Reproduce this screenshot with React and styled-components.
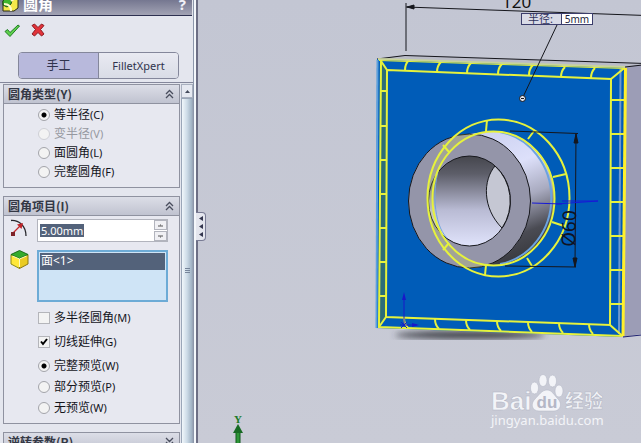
import React, { useState } from "react";
import styled, { createGlobalStyle, css } from "styled-components";

const GlobalStyle = createGlobalStyle`
  * { box-sizing: border-box; }
  body { margin: 0; background: #c5c8d4; }
  body, button, input {
    font-family: "Noto Sans", "Noto Sans CJK SC", sans-serif;
    font-size: 12px;
    line-height: 16px;
    color: #14151c;
  }
`;

const Window = styled.main`
  display: flex;
  height: 100vh;
  overflow: hidden;
`;

const Panel = styled.aside`
  display: flex;
  flex-direction: column;
  flex: none;
  width: 198px;
  border-right: 2px solid #6d6f85;
  background: #e4e6ee;
  box-shadow: inset -2px 0 #f4f7fb, inset -3px 0 #8c97ab;
  overflow: hidden;
`;

const TitleBar = styled.header`
  display: flex;
  flex: none;
  align-items: flex-end;
  gap: 4px;
  height: 16px;
  margin-right: 4px;
  padding: 0 6px 3px 2px;
  border-bottom: 1px solid #2d3050;
  background: linear-gradient(#757790, #a2a3b4);
  overflow: hidden;
`;

const Title = styled.h1`
  flex: 1;
  margin: 0;
  font: bold 15px/16px "Noto Sans CJK SC", sans-serif;
  color: #fff;
`;

const BareButton = styled.button`
  display: flex;
  align-items: center;
  justify-content: center;
  padding: 0;
  border: 0;
  background: none;
`;

const HelpButton = styled(BareButton)`
  font: bold 15px/16px "Noto Sans", sans-serif;
  color: #f2f2f8;
`;

const Actions = styled.div`
  display: flex;
  flex: none;
  align-items: center;
  gap: 10px;
  height: 28px;
  padding-left: 3px;
`;

const Tabs = styled.div`
  display: flex;
  flex: none;
  height: 27px;
  margin: 8px 17px 3px 18px;
  border: 1px solid #84879b;
  border-radius: 4px;
  overflow: hidden;
`;

const Tab = styled.button`
  flex: 1;
  padding: 0;
  border: 0;
  background: linear-gradient(#e9eaf2, #d9dce6);
  font-size: ${(p) => (p.$latin ? "11px" : "12px")};
  color: #30334d;
  ${(p) =>
    p.$active &&
    css`
      border-right: 1px solid #84879b;
      background: #b8b9dc;
    `}
`;

const ScrollArea = styled.div`
  display: flex;
  flex: 1;
  min-height: 0;
  margin-right: 3px;
  border-top: 1px solid #84879b;
`;

const Groups = styled.div`
  display: flex;
  flex: 1;
  flex-direction: column;
  gap: 8px;
  padding: 1px 1px 0 3px;
  overflow: hidden;
`;

const Group = styled.section`
  flex: none;
  border: 1px solid #8f92a0;
  background: #e7e8f0;
`;

const GroupHeader = styled.h2`
  display: flex;
  align-items: center;
  justify-content: space-between;
  height: 19px;
  margin: 0;
  padding: 0 5px 0 4px;
  border-bottom: 1px solid #8f92a0;
  background: linear-gradient(#dcdee7, #c0c3d0);
  font: bold 12px/18px "Noto Sans CJK SC", sans-serif;
  color: #343845;
`;

const TypeBody = styled.div`
  display: flex;
  flex-direction: column;
  gap: 3px;
  padding: 3px 8px 7px 34px;
`;

const ItemsBody = styled.div`
  display: flex;
  flex-direction: column;
  padding: 3px 11px 7px 4px;
`;

const Stack = styled.div`
  display: flex;
  flex-direction: column;
  gap: ${(p) => p.$gap}px;
  padding: ${(p) => p.$top}px 0 0 30px;
`;

const Option = styled.label`
  display: flex;
  align-items: center;
  gap: 4px;
  height: 16px;
  white-space: nowrap;
  color: ${(p) => (p.$muted ? "#9698a0" : "#14151c")};
`;

const Shortcut = styled.span`
  font-size: 11px;
`;

const Choice = styled.input`
  flex: none;
  appearance: none;
  width: 12px;
  height: 12px;
  margin: 0;
  border: 1px solid #a3a4aa;
  background: #f3f3f3;
  &:disabled { border-color: #cfd0d6; }
`;

const Radio = styled(Choice)`
  border-radius: 50%;
  &:checked { background: radial-gradient(circle, #000 2px, #f3f3f3 3px); }
`;

const CheckBox = styled(Choice)`
  border-color: #b4b5ba;
`;

const CheckWrap = styled.span`
  display: grid;
  > * { grid-area: 1 / 1; }
  svg { pointer-events: none; }
`;

const FieldRow = styled.div`
  display: flex;
  gap: 8px;
  margin-bottom: 8px;
`;

const FieldIcon = styled.span`
  flex: none;
  width: 21px;
  padding-left: 2px;
`;

const Spinner = styled.div`
  display: flex;
  flex: 1;
  min-width: 0;
  height: 23px;
  border: 1px solid #b2b4bd;
  background: #fff;
`;

const SizeInput = styled.input`
  flex: 1;
  min-width: 0;
  width: 0;
  padding: 0 0 0 3px;
  border: 0;
  outline: 0;
  background: linear-gradient(#53627a, #53627a) 2px 4px / 44px 13px no-repeat;
  color: #fff;
  font: 11px/16px "Noto Sans", sans-serif;
`;

const SpinButtons = styled.div`
  display: flex;
  flex-direction: column;
  gap: 1px;
  width: 13px;
`;

const SpinButton = styled(BareButton)`
  flex: 1;
  border: 1px solid #b2b4bd;
  background: #f0f0f4;
`;

const FaceList = styled.ul`
  flex: 1;
  height: 52px;
  margin: 0;
  padding: 1px;
  border: 2px solid #6dabd6;
  background: #cfe4f6;
  list-style: none;
`;

const Face = styled.li`
  height: 17px;
  padding-left: 1px;
  background: #53627a;
  color: #fff;
  font-size: 12px;
`;

const ScrollBar = styled.div`
  display: flex;
  flex: none;
  flex-direction: column;
  width: 12px;
  padding-top: 1px;
  background: #dfe3ea;
`;

const ScrollUp = styled(BareButton)`
  height: 14px;
  border: 1px solid #a9b0bf;
  background: #e6e9f1;
`;

const Thumb = styled.div`
  display: flex;
  flex: 1;
  align-items: center;
  justify-content: center;
  border: 1px solid #9aa6b8;
  border-bottom: 0;
  background: linear-gradient(90deg, #f1f7fb, #cddbe7 50%, #9eb0c2);
`;

const Viewport = styled.section`
  position: relative;
  flex: 1;
  min-width: 0;
  background: linear-gradient(#c3c6d3, #c9cbd6);
`;

const Scene = styled.svg`
  display: block;
  width: 100%;
  height: 100%;
`;

const Flyout = styled.button`
  position: absolute;
  left: -2px;
  top: 212px;
  display: flex;
  align-items: center;
  justify-content: center;
  width: 10px;
  height: 29px;
  padding: 0;
  border: 1px solid #787b94;
  border-left: 0;
  border-radius: 0 4px 4px 0;
  background: #e4e6ee;
`;

const Callout = styled.label`
  position: absolute;
  left: 72.9%;
  top: 2.9%;
  display: flex;
  width: 72px;
  height: 12px;
  border: 1px solid #3b3d6b;
  background: #d9dbe7;
  font-size: 11px;
  line-height: 10px;
  color: #30335c;
`;

const CalloutName = styled.span`
  flex: 1;
  padding-left: 6px;
  border-right: 1px solid #3b3d6b;
  white-space: nowrap;
`;

const CalloutInput = styled.input`
  width: 30px;
  padding: 0;
  border: 0;
  background: #fff;
  text-align: center;
  font: 10px/10px "Noto Sans", sans-serif;
  color: #1c1e3c;
`;

const AppIcon = () => (
  <svg width="17" height="16" viewBox="0 0 17 16">
    <path d="M1 5 5 0h11v12l-4 3H1z" fill="#f5e94a" stroke="#2d2d12" />
    <path d="M1 5 5 0h10l-5 4-1 4-4 3-4-2z" fill="#3fb52e" stroke="#1d5212" />
    <path d="M2 8q7 0 7 7M9 5l6-4" fill="none" stroke="#fffbd0" strokeWidth="2" />
  </svg>
);

const OkIcon = () => (
  <svg width="18" height="15" viewBox="0 0 18 15">
    <path d="M2 8.500 4.500 6.500 7 9.500 15 2l1.500 1L7 13.500z" fill="#5fd04c" stroke="#1f7d25" strokeLinejoin="round" />
  </svg>
);

const CancelIcon = () => (
  <svg width="14" height="14" viewBox="0 0 14 14">
    <path d="M1 2.500 3.500 1 7 4.500 10.500 1 13 2.500 9.500 6.500 13 11l-2.500 2L7 9.500 3.500 13 1 11l3.500-4.500z" fill="#e2333a" stroke="#8d1a20" strokeLinejoin="round" />
  </svg>
);

const Chevrons = ({ down }) => (
  <svg width="9" height="10" viewBox="0 0 9 10">
    <path d={down ? "M1 1l3.500 3.500L8 1M1 5l3.500 3.500L8 5" : "M1 5l3.500-3.500L8 5M1 9l3.500-3.500L8 9"} fill="none" stroke="#4a4e5e" strokeWidth="1.300" />
  </svg>
);

const RadiusIcon = () => (
  <svg width="18" height="18" viewBox="0 0 18 18">
    <path d="M1 1.500C9 1 16 7 16 17" fill="none" stroke="#26262b" strokeWidth="1.300" />
    <path d="M3 14 10 7" stroke="#c3262b" strokeWidth="1.300" />
    <path d="M13 4 11.500 10 7 5.500z" fill="#c3262b" />
    <rect x="1" y="13" width="4" height="4" fill="#7d2227" />
  </svg>
);

const CubeIcon = () => (
  <svg width="19" height="19" viewBox="0 0 19 19">
    <path d="M1 4.500v9.500l8.500 4.500V8z" fill="#ffe83a" stroke="#8b8a15" />
    <path d="M9.500 8v10.500L18 14V4.500z" fill="#eacb22" stroke="#8b7a15" />
    <path d="M1 4.500 9.500.5 18 4.500 9.500 8.500z" fill="#35ab2d" stroke="#1d6e1b" />
    <path d="M9.500 9V17M2.500 6l7 3 7-3" fill="none" stroke="#fffbc0" />
  </svg>
);

const Tick = () => (
  <svg width="12" height="12" viewBox="0 0 12 12">
    <path d="M3 5.500 5 8l4-5" fill="none" stroke="#000" strokeWidth="2" />
  </svg>
);

function RadioOption({ name, text, hotkey, value, onPick, disabled }) {
  return (
    <Option $muted={disabled}>
      <Radio type="radio" name={name} disabled={disabled} checked={value === text} onChange={() => onPick(text)} />
      <span>{text}<Shortcut>({hotkey})</Shortcut></span>
    </Option>
  );
}

function CheckOption({ text, hotkey, initial }) {
  const [on, setOn] = useState(initial);
  return (
    <Option>
      <CheckWrap>
        <CheckBox type="checkbox" checked={on} onChange={() => setOn(!on)} />
        {on && <Tick />}
      </CheckWrap>
      <span>{text}<Shortcut>({hotkey})</Shortcut></span>
    </Option>
  );
}

const EDGE = "#e6f23c";
const topTicks = [[405, 70], [437, 72], [467, 73], [498, 74], [529, 75], [561, 77], [591, 78]];
const bottomTicks = [[404, 318], [435, 319], [466, 320], [497, 321], [528, 322], [559, 323], [589, 324]];
const leftTicks = [91, 126, 160, 194, 228, 262, 296];
const rightTicks = [100, 134, 168, 202, 236, 270, 304];

function Model() {
  return (
    <Scene viewBox="198 0 443 443" preserveAspectRatio="xMidYMid slice" role="img" aria-label="圆角预览">
      <defs>
        <linearGradient id="boss" x1="0" y1="0" x2="0.250" y2="1">
          <stop offset="0" stopColor="#c9cff0" />
          <stop offset="0.350" stopColor="#dde0fa" />
          <stop offset="0.600" stopColor="#a9abc0" />
          <stop offset="0.850" stopColor="#4a4b53" />
          <stop offset="1" stopColor="#3b3c42" />
        </linearGradient>
        <linearGradient id="bore" x1="0" y1="0" x2="0" y2="1">
          <stop offset="0" stopColor="#45464d" />
          <stop offset="0.200" stopColor="#5d5e69" />
          <stop offset="0.600" stopColor="#b9bbd4" />
          <stop offset="1" stopColor="#e0e3fb" />
        </linearGradient>
        <filter id="soft"><feGaussianBlur stdDeviation="3" /></filter>
        <clipPath id="face"><ellipse cx="469.500" cy="201" rx="61" ry="67" /></clipPath>
      </defs>

      <ellipse cx="470" cy="335" rx="75" ry="4" fill="#3d3f47" filter="url(#soft)" />
      <path d="M377 59 405 55 660 64 625 67z" fill="#b9bbc7" />
      <path d="M625 67 660 62V331L623 337z" fill="#9c9db6" />
      <path d="M377 59 405 55.500 660 64M625 67l35-4" fill="none" stroke="#15161c" />
      <path d="M623 337l37-4" stroke="#1f2270" />
      <path d="M377 59 625 67 622 337 376 328z" fill="#005cb8" />
      <path d="M377.500 60 376.500 328" stroke="#5ba0dc" strokeWidth="2" />
      <path d="M381 61 387 70 386 317 379 327z" fill="#2c6d78" />
      <path d="M620.500 69 619 334" stroke="#6f98cc" strokeWidth="2" />

      <g fill="none" stroke={EDGE} strokeWidth="2">
        <path d="M381 61v-1L379 327 622.500 336" />
        <path d="M387 70 611 79 610 325 386 317z" />
        <path d="M381 61l6 9M625 67.500 611 79M622.500 336 610 325M379 327l7-10" />
        {topTicks.map(([x, y]) => <path key={x} d={`M${x} ${y}q0-6 4-10`} />)}
        {bottomTicks.map(([x, y]) => <path key={x} d={`M${x} ${y}q0 6 4 10`} />)}
        {leftTicks.map((y) => <path key={y} d={`M380 ${y}h6`} />)}
        {rightTicks.map((y) => <path key={y} d={`M611 ${y}h13`} />)}
      </g>
      <path d="M378 59 625 67" stroke="#c9d49a" strokeWidth="2" />
      <path d="M379 60.500 625 68.500" stroke={EDGE} />
      <path d="M625.500 68 623 336" stroke="#fff02c" strokeWidth="3" />

      <path d="M469 134 493 131A62 67 0 0 1 493 265L469 268z" fill="url(#boss)" />
      <path d="M500 132A62 67 0 0 1 500 264" fill="none" stroke="#6ba3e0" strokeWidth="2" />
      <ellipse cx="469.500" cy="201" rx="61" ry="67" fill="#9495a9" stroke="#17181d" />
      <ellipse cx="469.500" cy="201" rx="41" ry="45" fill="url(#bore)" stroke="#17181d" />
      <path d="M495 166C483 180 482 208 502 228A41 45 0 0 0 495 166z" fill="#c5c7d3" stroke="#17181d" />
      <path d="M440 165C432 187 433 224 447 238" fill="none" stroke="#72a5df" />

      <path clipPath="url(#face)" fillRule="evenodd" fill="#e6e84a" fillOpacity="0.180" d="M427.500 198a71 78.500 0 1 0 142 0a71 78.500 0 1 0-142 0zM432.500 198.500a61 67 0 1 0 122 0a61 67 0 1 0-122 0z" />
      <g fill="none" stroke={EDGE} strokeWidth="2">
        <ellipse cx="498.500" cy="198" rx="71" ry="78.500" />
        <ellipse cx="493.500" cy="198.500" rx="61" ry="67" />
        <path d="M487 120l-1 11M534 131l-6 8M566 174l-13 3M564 226l-12-4M532 266l-5-8M485 275l1-10M443 250l6-7M443 145l6 7" />
      </g>

      <g stroke="#15161c" fill="none">
        <path d="M406 3v48M406 7l254 9M557 25 523 97" />
        <path d="M510 131 578 133.500M576 134l-1 133M505 266l71 1" />
        <path d="M407 7l7-2v4zM576 134l-2 9h4zM575 267l-2-9h4z" fill="#15161c" />
      </g>
      <text x="502" y="8" fontFamily="Noto Sans" fontSize="17" fill="#111">120</text>
      <text transform="translate(575 247) rotate(-88)" fontFamily="Noto Sans" fontSize="19" fill="#101322">Ø60</text>
      <circle cx="522.500" cy="98.500" r="3" fill="#dfe2ec" stroke="#15161c" />
      <path d="M521 98.500h3" stroke="#15161c" />

      <path d="M532 203 562 204M556 204 598 201 562 201" fill="none" stroke="#1719d6" />
      <path d="M404 326V296M400 325h17M401 322l6 6M407 322l-6 6" fill="none" stroke="#1818c8" />
      <path d="M404 292l2 8h-4zM419 325l-7-2v4z" fill="#1818c8" />

      <path d="M236 430h4v30h-4z" fill="#2d9637" stroke="#125b1c" />
      <path d="M238 424l5 9h-10z" fill="#176b23" />
      <text x="238" y="423" textAnchor="middle" fontFamily="Liberation Serif" fontSize="11" fontWeight="bold" fill="#1b7a27">Y</text>

      <g fill="#f3f4f8" stroke="#b1b4c3" strokeWidth="0.500">
        <text x="491" y="410" fontFamily="Liberation Sans" fontSize="26" fontWeight="bold">Bai</text>
        <ellipse cx="534.500" cy="388" rx="4" ry="6" />
        <ellipse cx="543" cy="380.500" rx="4" ry="6" />
        <ellipse cx="552.500" cy="381" rx="4" ry="6" />
        <ellipse cx="559" cy="391" rx="4" ry="6" />
        <path d="M547 390c5 0 7 5 11 9 5 5 2 12-4 12h-15c-7 0-9-7-4-12 4-4 7-9 12-9z" />
        <text x="565" y="408" fontFamily="Noto Sans CJK SC" fontSize="19" fontWeight="bold">经验</text>
        <text x="491" y="425" fontFamily="Noto Sans" fontSize="13" stroke="none">jingyan.baidu.com</text>
      </g>
      <text x="547" y="408" textAnchor="middle" fontFamily="Liberation Sans" fontSize="17" fontWeight="bold" fill="#b4b7c6">du</text>
    </Scene>
  );
}

export default function App() {
  const [kind, setKind] = useState("等半径");
  const [preview, setPreview] = useState("完整预览");
  return (
    <Window>
      <GlobalStyle />
      <Panel>
        <TitleBar>
          <AppIcon />
          <Title>圆角</Title>
          <HelpButton aria-label="帮助">?</HelpButton>
        </TitleBar>
        <Actions>
          <BareButton aria-label="确定"><OkIcon /></BareButton>
          <BareButton aria-label="取消"><CancelIcon /></BareButton>
        </Actions>
        <Tabs>
          <Tab $active>手工</Tab>
          <Tab $latin>FilletXpert</Tab>
        </Tabs>
        <ScrollArea>
          <Groups>
            <Group>
              <GroupHeader>圆角类型(Y)<Chevrons /></GroupHeader>
              <TypeBody>
                <RadioOption name="kind" text="等半径" hotkey="C" value={kind} onPick={setKind} />
                <RadioOption name="kind" text="变半径" hotkey="V" value={kind} onPick={setKind} disabled />
                <RadioOption name="kind" text="面圆角" hotkey="L" value={kind} onPick={setKind} />
                <RadioOption name="kind" text="完整圆角" hotkey="F" value={kind} onPick={setKind} />
              </TypeBody>
            </Group>
            <Group>
              <GroupHeader>圆角项目(I)<Chevrons /></GroupHeader>
              <ItemsBody>
                <FieldRow>
                  <FieldIcon><RadiusIcon /></FieldIcon>
                  <Spinner>
                    <SizeInput aria-label="半径" defaultValue="5.00mm" />
                    <SpinButtons>
                      <SpinButton aria-label="增加"><svg width="5" height="3"><path d="M0 2h5M2 1h1" stroke="#555" /></svg></SpinButton>
                      <SpinButton aria-label="减少"><svg width="5" height="3"><path d="M0 1h5M2 2h1" stroke="#555" /></svg></SpinButton>
                    </SpinButtons>
                  </Spinner>
                </FieldRow>
                <FieldRow>
                  <FieldIcon><CubeIcon /></FieldIcon>
                  <FaceList aria-label="边线、面">
                    <Face>面&lt;1&gt;</Face>
                  </FaceList>
                </FieldRow>
                <Stack $gap={8} $top={0}>
                  <CheckOption text="多半径圆角" hotkey="M" initial={false} />
                  <CheckOption text="切线延伸" hotkey="G" initial />
                </Stack>
                <Stack $gap={5} $top={8}>
                  <RadioOption name="preview" text="完整预览" hotkey="W" value={preview} onPick={setPreview} />
                  <RadioOption name="preview" text="部分预览" hotkey="P" value={preview} onPick={setPreview} />
                  <RadioOption name="preview" text="无预览" hotkey="W" value={preview} onPick={setPreview} />
                </Stack>
              </ItemsBody>
            </Group>
            <Group>
              <GroupHeader>逆转参数(R)<Chevrons down /></GroupHeader>
            </Group>
          </Groups>
          <ScrollBar>
            <ScrollUp aria-label="向上滚动"><svg width="5" height="3"><path d="M0 3 2.500 0 5 3z" fill="#444a5c" /></svg></ScrollUp>
            <Thumb><svg width="5" height="6"><path d="M0 .5h5M0 2.500h5M0 4.500h5" stroke="#76849a" /></svg></Thumb>
          </ScrollBar>
        </ScrollArea>
      </Panel>
      <Viewport>
        <Model />
        <Callout>
          <CalloutName>半径:</CalloutName>
          <CalloutInput defaultValue="5mm" />
        </Callout>
        <Flyout aria-label="展开">
          <svg width="4" height="21"><path d="M4 0v5L0 2.500zM4 8v5L0 10.500zM4 16v5L0 18.500z" fill="#33364e" /></svg>
        </Flyout>
      </Viewport>
    </Window>
  );
}
